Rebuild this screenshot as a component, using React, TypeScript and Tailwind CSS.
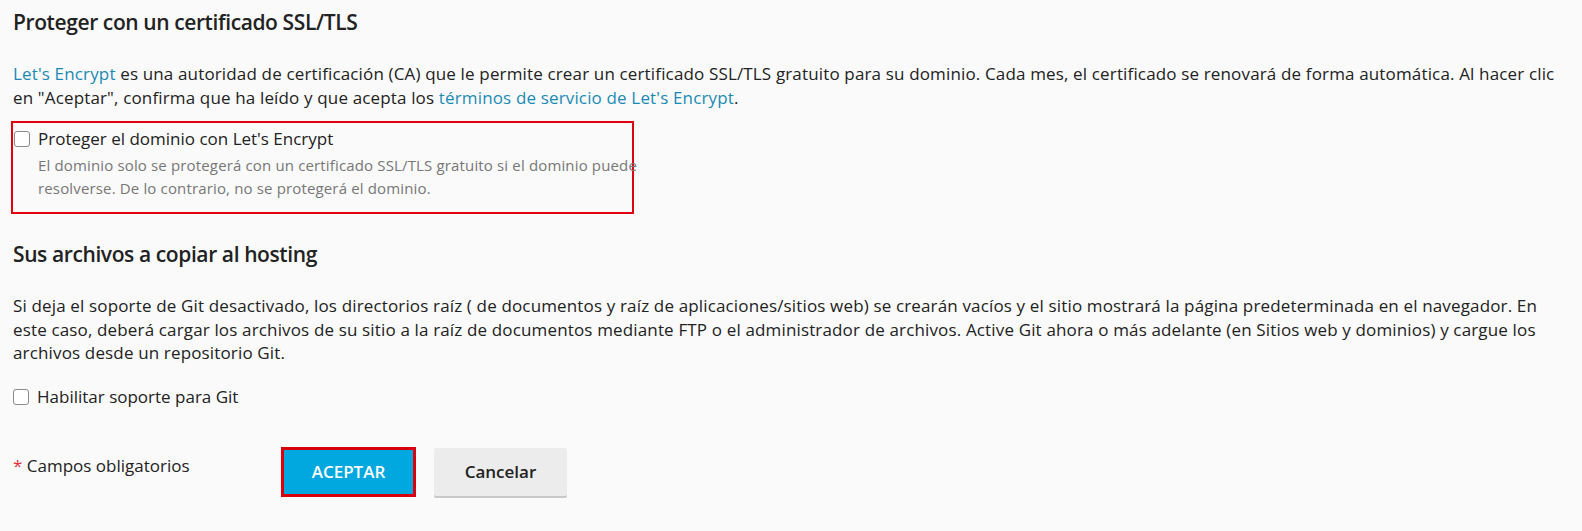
import React from 'react';

const font = { fontFamily: '"Open Sans", "Noto Sans", sans-serif' };

function Checkbox() {
  return <span className="mt-[2px] inline-block h-4 w-4 shrink-0 rounded-[3px] border border-[#8a8a8a] bg-white" />;
}

export default function App() {
  return (
    <div style={font} className="min-h-[531px] w-[1582px] bg-[#fafafa] text-[#222] antialiased">
      <div className="w-[1562px] pl-[13px] pt-[4px]">
        <h2 className="text-[21px] font-semibold leading-[36px] tracking-[-0.4px] text-[#222]">Proteger con un certificado SSL/TLS</h2>

        <p className="mt-[22px] text-[17px] leading-[24px] tracking-[0.15px]">
          <a className="text-[#1a8ab5]">Let's Encrypt</a> es una autoridad de certificación (CA) que le permite crear un certificado SSL/TLS gratuito para su dominio. Cada mes, el certificado se renovará de forma automática. Al hacer clic en "Aceptar", confirma que ha leído y que acepta los{' '}
          <a className="text-[#1a8ab5]">términos de servicio de Let's Encrypt</a>.
        </p>

        <div className="-ml-[2px] mt-[11px] w-[623px] border-2 border-[#e0000f] pb-[12px] pl-[1px] pt-[6px]">
          <label className="flex items-start gap-[8px]">
            <Checkbox />
            <div className="flex-1">
              <div className="text-[17px] leading-[20px]">Proteger el dominio con Let's Encrypt</div>
              <div className="mt-[5px] w-[620px] text-[15px] leading-[23px] tracking-[0.15px] text-[#777]">
                El dominio solo se protegerá con un certificado SSL/TLS gratuito si el dominio puede resolverse. De lo contrario, no se protegerá el dominio.
              </div>
            </div>
          </label>
        </div>

        <h2 className="mt-[22px] text-[21px] font-semibold leading-[36px] tracking-[-0.4px] text-[#222]">Sus archivos a copiar al hosting</h2>

        <p className="mt-[22px] text-[17px] leading-[23.5px] tracking-[0.15px]">
          Si deja el soporte de Git desactivado, los directorios raíz ( de documentos y raíz de aplicaciones/sitios web) se crearán vacíos y el sitio mostrará la página predeterminada en el navegador. En este caso, deberá cargar los archivos de su sitio a la raíz de documentos mediante FTP o el administrador de archivos. Active Git ahora o más adelante (en Sitios web y dominios) y cargue los archivos desde un repositorio Git.
        </p>

        <label className="mt-[22px] flex items-start gap-[8px]">
          <Checkbox />
          <span className="text-[17px] leading-[20px]">Habilitar soporte para Git</span>
        </label>

        <div className="mt-[40px] flex items-start">
          <div className="w-[268px] pt-[7px] text-[17px] leading-[24px]">
            <span className="text-[#e0323c]">*</span> Campos obligatorios
          </div>
          <div className="flex gap-[18px]">
            <button className="h-[50px] w-[135px] border-[3px] border-[#d9000d] bg-[#00a8df] text-[17px] font-semibold text-white">
              ACEPTAR
            </button>
            <button className="mt-[1px] h-[48px] w-[133px] rounded-[2px] bg-[#ececec] text-[17px] font-semibold text-[#222] shadow-[0_2px_0_#c8c8c8]">
              Cancelar
            </button>
          </div>
        </div>
      </div>
    </div>
  );
}
